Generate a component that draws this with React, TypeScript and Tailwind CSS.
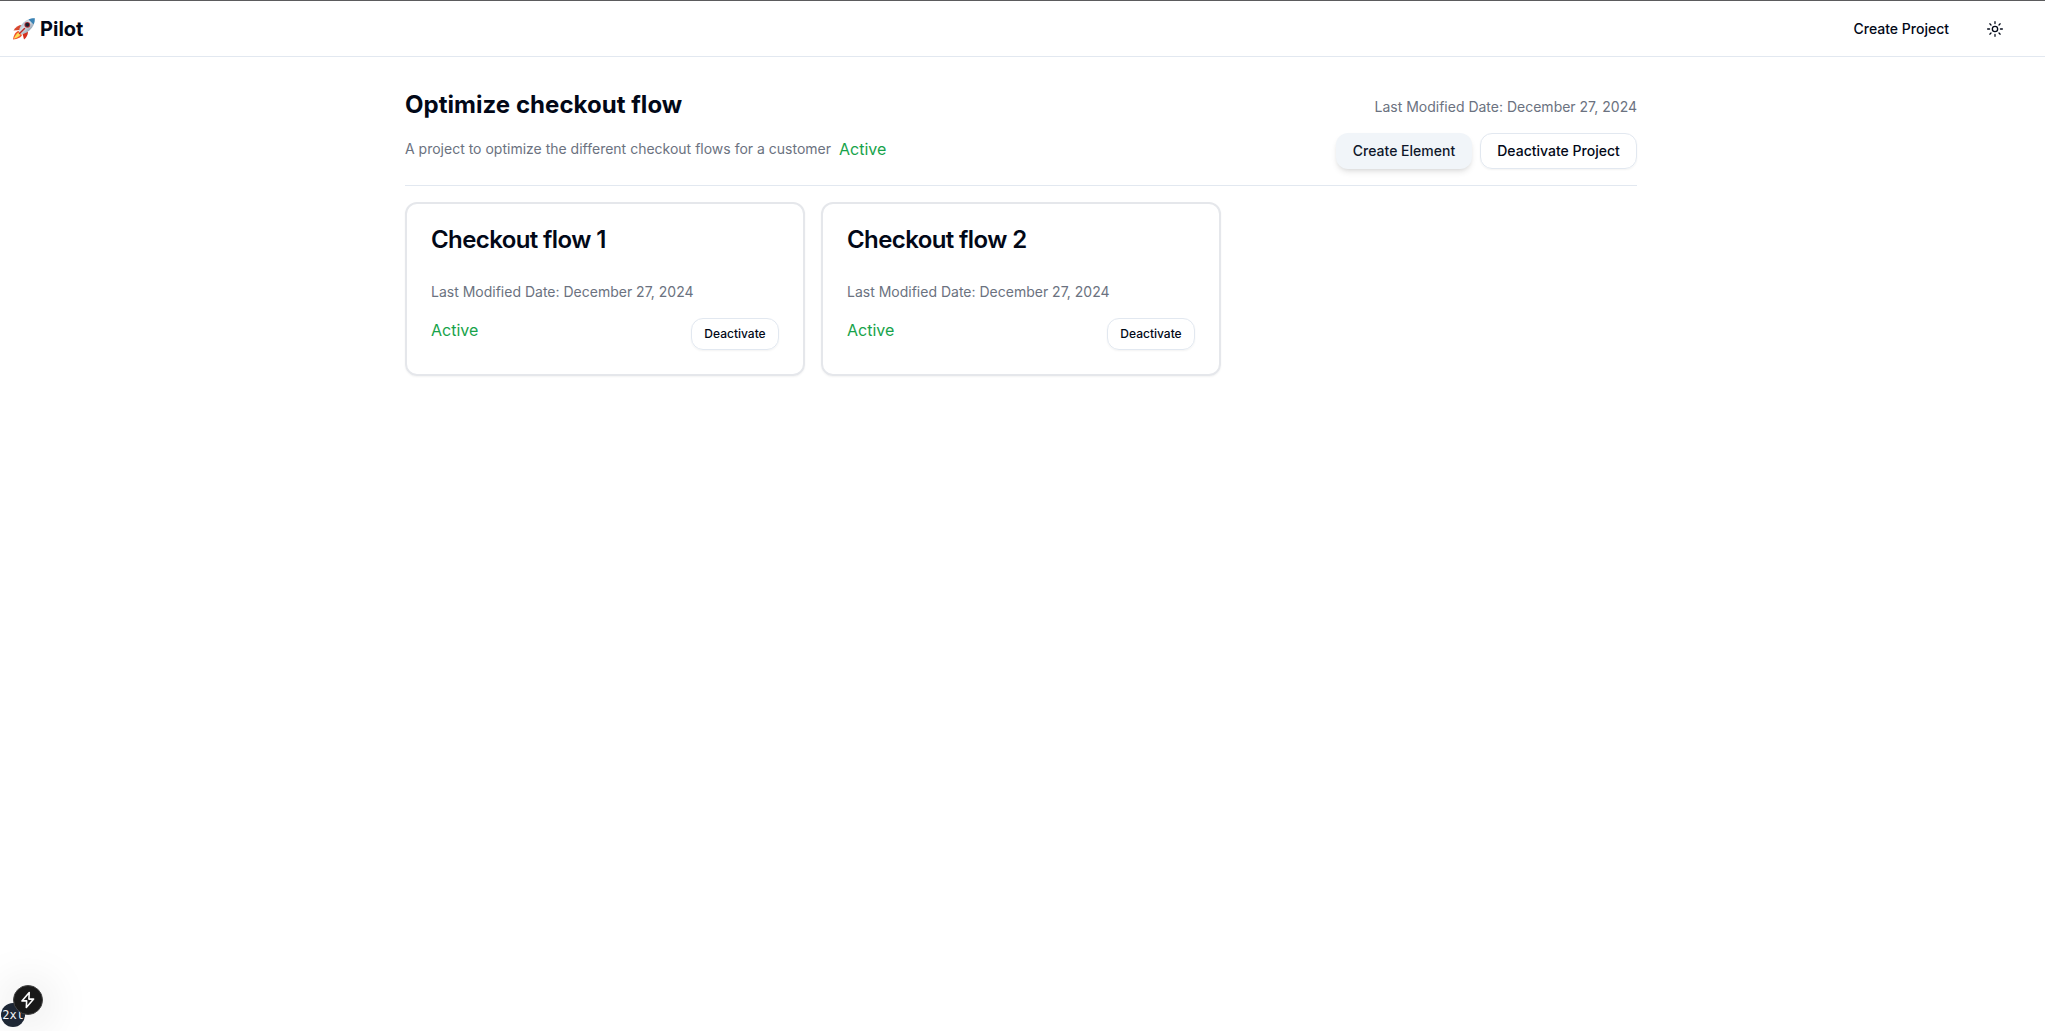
const flows = ["Checkout flow 1", "Checkout flow 2"];

function Rocket() {
  return (
    <svg viewBox="0 0 24 24" className="h-[24px] w-[24px]" aria-hidden="true">
      <defs>
        <linearGradient id="hull" x1="0" y1="0" x2="1" y2="1">
          <stop offset="0" stopColor="#7a8fa5" />
          <stop offset="0.45" stopColor="#dbe4eb" />
          <stop offset="1" stopColor="#4a6078" />
        </linearGradient>
      </defs>
      <path d="M10 8C6.500 8 3.500 10 1.500 13.500L8 13Z" fill="#d8482f" />
      <path d="M16 14.500C16 18 14.500 20.500 12 22.500L10.500 16.500Z" fill="#d5301f" />
      <path d="M6.500 14C3.500 14.500 1.800 18 1 22.500C5.500 22 9 20.500 10 18Z" fill="#f0522c" />
      <path d="M6.500 15.500C4.500 16.500 2.500 19.500 1.800 21.800C5 21 7.500 19.500 8.500 17.500Z" fill="#ffdd55" />
      <path d="M22.800 1.200C16 1.200 10.500 4.500 7.500 11.500L7 15L9.500 17.500L12.500 16.500C19.500 13 22.800 8 22.800 1.200Z" fill="url(#hull)" />
      <path d="M22.800 1.200C20 1.200 18 1.700 16.500 2.400L21.700 7.500C22.500 5.500 22.800 3.400 22.800 1.200Z" fill="#3a83b5" />
      <circle cx="15.300" cy="7.800" r="2.900" fill="#b22f35" />
      <circle cx="15.300" cy="7.800" r="2" fill="#19212f" />
      <path d="M12.500 11.500L7.500 16.500" stroke="#c22923" strokeWidth="1.500" strokeLinecap="round" />
    </svg>
  );
}

function Sun() {
  return (
    <svg viewBox="0 0 15 15" className="h-4 w-4" fill="none" stroke="currentColor" aria-hidden="true">
      <circle cx="7.5" cy="7.5" r="2.5" strokeWidth="1.250" />
      <path
        d="M7.500 .6v1.800M7.500 12.600v1.800M.6 7.500h1.800M12.600 7.500h1.800M2.650 2.650l1.100 1.100M11.250 11.250l1.100 1.100M12.350 2.650l-1.100 1.100M3.750 11.250l-1.100 1.100"
        strokeWidth="1.200"
        strokeLinecap="round"
      />
    </svg>
  );
}

function FlowCard({ title }: { title: string }) {
  return (
    <article className="h-[174px] rounded-xl border-2 border-[#e5e7eb] p-6 shadow-[0_1px_2px_rgba(0,0,0,0.05)]">
      <h2 className="text-2xl leading-none font-semibold tracking-tight">{title}</h2>
      <p className="mt-[30px] text-sm text-[#6b7280]">Last Modified Date: December 27, 2024</p>
      <div className="mt-4 flex items-start justify-between">
        <span className="text-base leading-6 text-[#16a34a]">Active</span>
        <button className="h-8 w-[88px] rounded-xl border border-[#e2e8f0] text-xs font-medium shadow-[0_1px_2px_rgba(0,0,0,0.05)]">
          Deactivate
        </button>
      </div>
    </article>
  );
}

export default function App() {
  return (
    <div className="relative h-[1031px] w-full overflow-hidden border-t border-[#5b5b5d] bg-white font-['Inter',sans-serif] text-[#020817] antialiased">
      <header className="flex h-14 items-center justify-between border-b border-[#e2e8f0] pr-[42px] pl-3">
        <div className="flex items-center gap-1 text-xl font-bold">
          <Rocket />
          <span>Pilot</span>
        </div>
        <div className="flex items-center gap-[38px]">
          <button className="text-sm font-medium">Create Project</button>
          <Sun />
        </div>
      </header>
      <main className="ml-[405px] w-[1232px]">
        <section className="flex h-[129px] justify-between border-b border-[#e2e8f0]">
          <div>
            <h1 className="mt-8 text-2xl leading-8 font-bold tracking-[0.04px]">Optimize checkout flow</h1>
            <div className="mt-4 flex items-center gap-2">
              <p className="text-sm text-[#6b7280]">A project to optimize the different checkout flows for a customer</p>
              <span className="text-base text-[#16a34a]">Active</span>
            </div>
          </div>
          <div className="flex flex-col items-end">
            <p className="mt-10 text-sm text-[#6b7280]">Last Modified Date: December 27, 2024</p>
            <div className="mt-4 flex gap-2">
              <button className="h-9 w-[136px] rounded-xl bg-[#f1f5f9] text-sm font-medium text-[#0f172a] shadow-[0_4px_6px_-1px_rgba(0,0,0,0.1),0_2px_4px_-2px_rgba(0,0,0,0.1)]">
                Create Element
              </button>
              <button className="h-9 w-[157px] rounded-xl border border-[#e2e8f0] text-sm font-medium shadow-[0_1px_2px_rgba(0,0,0,0.05)]">
                Deactivate Project
              </button>
            </div>
          </div>
        </section>
        <section className="mt-4 grid grid-cols-3 gap-4">
          {flows.map((title) => (
            <FlowCard key={title} title={title} />
          ))}
        </section>
      </main>
      <div className="absolute bottom-1 left-[1px] flex h-6 w-6 items-center justify-center rounded-full bg-[#1f2937] font-['DejaVu_Sans_Mono',monospace] text-xs whitespace-nowrap text-white">
        2xl
      </div>
      <div className="absolute bottom-[16px] left-[13px] flex h-[30px] w-[30px] items-center justify-center rounded-full border border-[#444] bg-[#191919] shadow-[0_4px_48px_rgba(0,0,0,0.22)]">
        <svg viewBox="0 0 16 16" className="h-[18px] w-[18px]" fill="none" aria-hidden="true">
          <path d="M9.100 1.300L2.600 8.800H6.800L6.500 14.700L13 7.200H8.800Z" stroke="white" strokeWidth="1.400" strokeLinejoin="round" />
        </svg>
      </div>
    </div>
  );
}
